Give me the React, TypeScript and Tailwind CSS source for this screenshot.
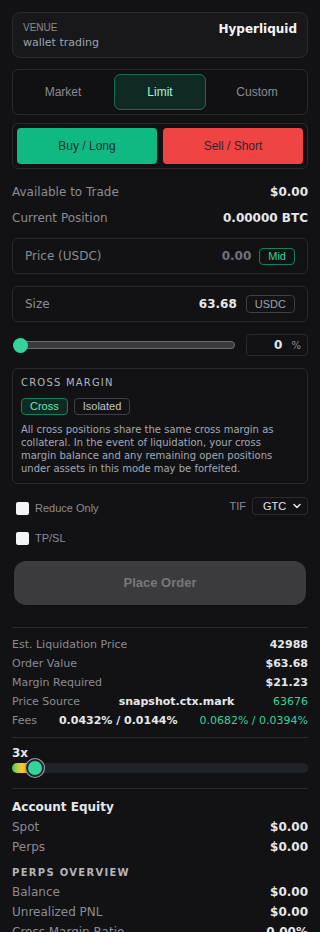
import { ChevronDown } from "lucide-react";

const rows = [
  { label: "Est. Liquidation Price", value: "42988" },
  { label: "Order Value", value: "$63.68" },
  { label: "Margin Required", value: "$21.23" },
];

function Row({ label, value }: { label: string; value: string }) {
  return (
    <div className="flex items-center justify-between">
      <span className="text-[#8b8b93]">{label}</span>
      <span className="font-bold text-[#e5e7eb]">{value}</span>
    </div>
  );
}

export default function App() {
  return (
    <div className="min-h-screen bg-[#121214] px-3 pt-3 text-[#e5e7eb] font-['DejaVu_Sans',sans-serif]">
      {/* Venue */}
      <div className="flex items-start justify-between rounded-lg border border-[#2a2a2e] bg-[#18181b] px-[10px] pt-[8px] pb-[6px]">
        <div>
          <div className="text-[10px] leading-[14px] text-[#8b8b93] font-['Liberation_Sans',sans-serif]">VENUE</div>
          <div className="text-[11px] leading-[16px] text-[#9ca3af]">wallet trading</div>
        </div>
        <div className="text-[12px] font-bold leading-[16px] text-[#f3f4f6]">Hyperliquid</div>
      </div>

      {/* Order type */}
      <div className="mt-[11px] grid grid-cols-3 gap-[5px] rounded-md border border-[#2a2a2e] bg-[#111113] p-[4px] font-['Liberation_Sans',sans-serif] text-[12px]">
        <button className="h-[36px] rounded-md text-[#8b8b93]">Market</button>
        <button className="h-[36px] rounded-md border border-[#1d6b4f] bg-[#0f2a23] text-[#a7f3d0]">Limit</button>
        <button className="h-[36px] rounded-md text-[#8b8b93]">Custom</button>
      </div>

      {/* Side */}
      <div className="mt-[8px] grid grid-cols-2 gap-[6px] rounded-md border border-[#2a2a2e] p-[4px] font-['Liberation_Sans',sans-serif] text-[12px]">
        <button className="h-[36px] rounded bg-[#10b981] text-[#1f2937]">Buy / Long</button>
        <button className="h-[36px] rounded bg-[#ef4444] text-[#1f2937]">Sell / Short</button>
      </div>

      <div className="mt-[14px] flex flex-col gap-[8px] text-[12px] leading-[18px]">
        <div className="flex justify-between">
          <span className="text-[#8b8b93]">Available to Trade</span>
          <span className="font-bold">$0.00</span>
        </div>
        <div className="flex justify-between">
          <span className="text-[#8b8b93]">Current Position</span>
          <span className="font-bold">0.00000 BTC</span>
        </div>
      </div>

      {/* Price */}
      <div className="mt-[11px] flex h-[36px] items-center justify-between rounded-md border border-[#2a2a2e] px-[12px] text-[12px]">
        <span className="text-[#8b8b93]">Price (USDC)</span>
        <div className="flex items-center gap-[8px]">
          <span className="font-bold text-[#6b7280]">0.00</span>
          <span className="rounded border border-[#15805c] px-[8px] text-[11px] leading-[15px] text-[#34d399] font-['Liberation_Sans',sans-serif]">Mid</span>
        </div>
      </div>

      {/* Size */}
      <div className="mt-[12px] flex h-[36px] items-center justify-between rounded-md border border-[#2a2a2e] px-[12px] text-[12px]">
        <span className="text-[#8b8b93]">Size</span>
        <div className="flex items-center gap-[9px]">
          <span className="font-bold text-[#e5e7eb]">63.68</span>
          <span className="rounded border border-[#3f3f46] px-[8px] text-[11px] leading-[16px] text-[#9ca3af] font-['Liberation_Sans',sans-serif]">USDC</span>
        </div>
      </div>

      {/* Size slider */}
      <div className="mt-[12px] flex items-center gap-[11px]">
        <div className="relative ml-[4px] h-[8px] flex-1 rounded-full border border-[#6b6b70] bg-[#3a3a3e]">
          <div className="absolute -top-[4.5px] -left-[4px] h-[15px] w-[15px] rounded-full bg-[#34d399]" />
        </div>
        <div className="flex h-[22px] w-[62px] items-center rounded border border-[#2a2a2e] pl-[18px] pr-[6px] text-[12px]">
          <span className="flex-1 text-center font-bold">0</span>
          <span className="text-[10px] text-[#8b8b93]">%</span>
        </div>
      </div>

      {/* Cross margin */}
      <div className="mt-[12px] rounded-md border border-[#2a2a2e] px-[8px] pt-[7px] pb-[8px]">
        <div className="text-[10px] leading-[14px] tracking-[1.2px] text-[#b4b4bb]">CROSS MARGIN</div>
        <div className="mt-[8px] flex gap-[6px] font-['Liberation_Sans',sans-serif] text-[11px]">
          <button className="h-[17px] rounded border border-[#15805c] bg-[#0f2a23] px-[8px] leading-[15px] text-[#6ee7b7]">Cross</button>
          <button className="h-[17px] rounded border border-[#3f3f46] px-[8px] leading-[15px] text-[#c4c4cc]">Isolated</button>
        </div>
        <p className="mt-[8px] text-[10px] leading-[13px] text-[#a1a9b8]">
          All cross positions share the same cross margin as collateral. In the event of liquidation, your cross margin balance and any remaining open positions under assets in this mode may be forfeited.
        </p>
      </div>

      {/* Options */}
      <div className="mt-[13px] flex items-start justify-between">
        <label className="flex items-center gap-[6px] pl-[4px] pt-[4px] text-[11px] leading-[15px] text-[#8b8b93] font-['Liberation_Sans',sans-serif]">
          <span className="h-[13px] w-[13px] rounded-[2px] bg-[#f3f4f6]" />
          Reduce Only
        </label>
        <div className="flex items-center gap-[6px] text-[11px] font-['Liberation_Sans',sans-serif]">
          <span className="text-[#8b8b93]">TIF</span>
          <div className="flex h-[18px] w-[56px] items-center justify-between rounded border border-[#2a2a2e] pl-[10px] pr-[4px] text-[#e5e7eb]">
            GTC
            <ChevronDown className="h-[12px] w-[12px]" strokeWidth={3} />
          </div>
        </div>
      </div>
      <label className="mt-[15px] flex items-center gap-[6px] pl-[4px] text-[11px] leading-[15px] text-[#8b8b93] font-['Liberation_Sans',sans-serif]">
        <span className="h-[13px] w-[13px] rounded-[2px] bg-[#f3f4f6]" />
        TP/SL
      </label>

      <button className="mt-[15px] ml-[2px] flex h-[44px] w-[292px] items-center justify-center rounded-xl bg-[#3b3b3d] text-[13px] font-bold text-[#77777b] font-['Liberation_Sans',sans-serif]">
        Place Order
      </button>

      <div className="mt-[22px] border-t border-[#2a2a2e]" />

      {/* Order info */}
      <div className="mt-[9px] flex flex-col gap-[3px] text-[11px] leading-[16px]">
        {rows.map((r) => (
          <Row key={r.label} label={r.label} value={r.value} />
        ))}
        <div className="flex items-center justify-between">
          <span className="text-[#8b8b93]">Price Source</span>
          <span className="font-bold text-[#e5e7eb]">snapshot.ctx.mark</span>
          <span className="text-[#34d399]">63676</span>
        </div>
        <div className="flex items-center justify-between">
          <span className="text-[#8b8b93]">Fees</span>
          <span className="font-bold text-[#e5e7eb]">0.0432% / 0.0144%</span>
          <span className="text-[#34d399]">0.0682% / 0.0394%</span>
        </div>
      </div>

      <div className="mt-[8px] border-t border-[#2a2a2e]" />

      {/* Leverage */}
      <div className="mt-[7px] text-[12px] font-bold leading-[16px]">3x</div>
      <div className="relative mt-[2px] h-[10px] rounded-full bg-[#1f2229]">
        <div className="absolute left-0 top-0 h-[10px] w-[20px] rounded-l-full bg-gradient-to-r from-[#22c55e] via-[#facc15] to-[#ef4444]" />
        <div className="absolute -top-[4px] left-[14px] h-[18px] w-[18px] rounded-full border-2 border-[#1f2229] bg-[#34d399] ring-1 ring-[#9ca3af]" />
      </div>

      <div className="mt-[15px] border-t border-[#2a2a2e]" />

      {/* Account */}
      <div className="mt-[9px] text-[12px] font-bold leading-[18px]">Account Equity</div>
      <div className="mt-[3px] flex flex-col gap-[4px] text-[12px] leading-[16px]">
        <Row label="Spot" value="$0.00" />
        <Row label="Perps" value="$0.00" />
      </div>
      <div className="mt-[10px] text-[10px] font-bold leading-[16px] tracking-[1.3px] text-[#b4b4bb]">PERPS OVERVIEW</div>
      <div className="mt-[3px] flex flex-col gap-[4px] text-[12px] leading-[16px]">
        <Row label="Balance" value="$0.00" />
        <Row label="Unrealized PNL" value="$0.00" />
        <Row label="Cross Margin Ratio" value="0.00%" />
      </div>
    </div>
  );
}
